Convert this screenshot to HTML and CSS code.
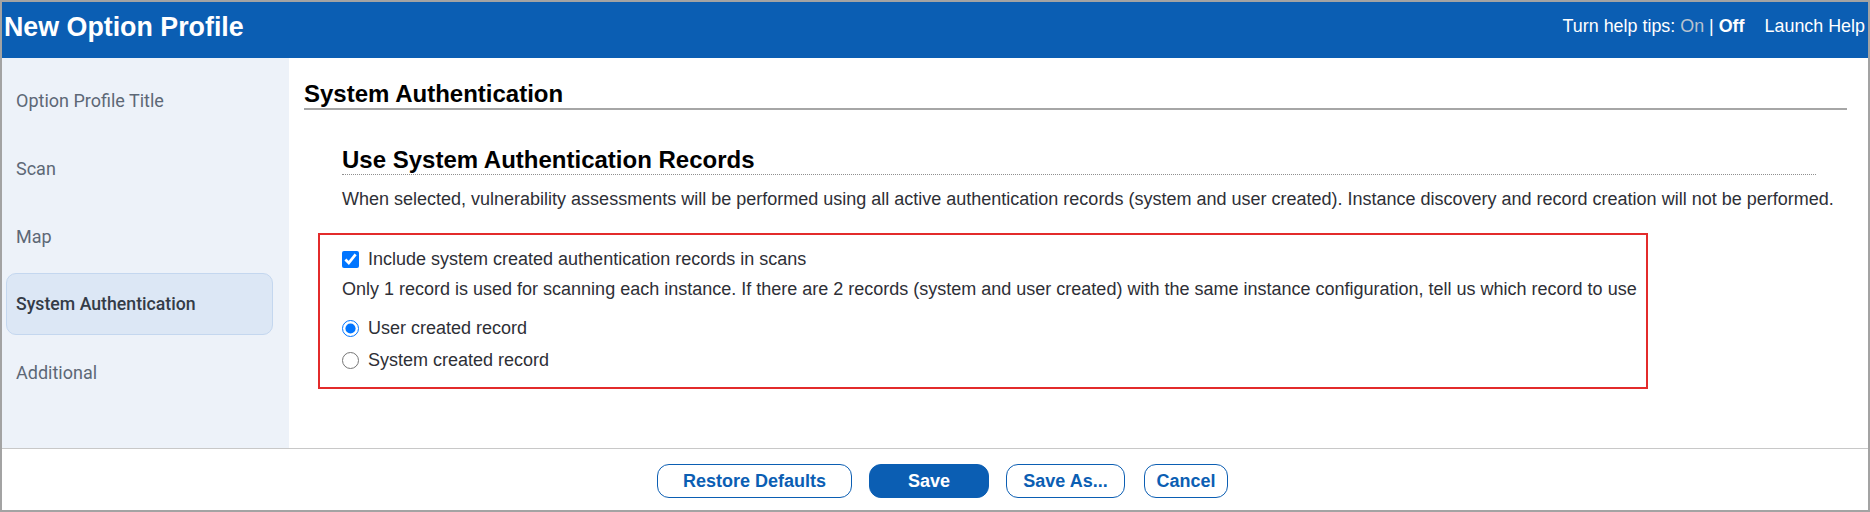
FILE: index.html
```html
<!DOCTYPE html>
<html lang="en">
<head>
<meta charset="utf-8">
<title>New Option Profile</title>
<link rel="stylesheet" href="styles.css">
</head>
<body>
<div class="frame">
  <header class="topbar">
    <h1 class="title">New Option Profile</h1>
    <div class="help">
      <span class="tips">Turn help tips: <span class="tips-on">On</span> | <b>Off</b></span>
      <span class="launch">Launch Help</span>
    </div>
  </header>
  <div class="middle">
    <nav class="sidebar">
      <div class="nav-item">Option Profile Title</div>
      <div class="nav-item">Scan</div>
      <div class="nav-item">Map</div>
      <div class="nav-item is-active">System Authentication</div>
      <div class="nav-item">Additional</div>
    </nav>
    <main class="content">
      <h2 class="page-heading">System Authentication</h2>
      <section class="auth-section">
        <h3 class="section-heading">Use System Authentication Records</h3>
        <p class="desc">When selected, vulnerability assessments will be performed using all active authentication records (system and user created). Instance discovery and record creation will not be performed.</p>
        <div class="highlight">
          <label class="opt-row"><input type="checkbox" checked><span>Include system created authentication records in scans</span></label>
          <p class="note">Only 1 record is used for scanning each instance. If there are 2 records (system and user created) with the same instance configuration, tell us which record to use</p>
          <label class="opt-row radio-first"><input type="radio" name="rec" checked><span>User created record</span></label>
          <label class="opt-row radio-second"><input type="radio" name="rec"><span>System created record</span></label>
        </div>
      </section>
    </main>
  </div>
  <footer class="actions">
    <button class="btn btn-restore">Restore Defaults</button>
    <button class="btn btn-primary btn-save">Save</button>
    <button class="btn btn-saveas">Save As...</button>
    <button class="btn btn-cancel">Cancel</button>
  </footer>
</div>
</body>
</html>
```
FILE: styles.css
```css
* { box-sizing: border-box; }
html, body { margin: 0; padding: 0; background: #fff; }
body { font-family: "Liberation Sans", Arial, sans-serif; color: #2e2f36; }

.frame {
  width: 1870px;
  height: 512px;
  border: 2px solid #a3a3a3;
  display: flex;
  flex-direction: column;
  overflow: hidden;
}

.topbar {
  height: 56px;
  flex: none;
  background: #0b5eb3;
  color: #fff;
  display: flex;
  justify-content: space-between;
  align-items: flex-start;
  padding: 0 3px 0 2px;
}
.title {
  margin: 0;
  padding-top: 9px;
  font-size: 26.8px;
  line-height: 32px;
  font-weight: bold;
}
.help {
  padding-top: 13px;
  font-size: 17.9px;
  line-height: 22px;
  display: flex;
}
.tips-on { color: #b9c3cf; }
.help b { font-weight: bold; }
.launch { margin-left: 20px; }

.middle {
  height: 390px;
  flex: none;
  display: flex;
}
.sidebar {
  width: 287px;
  flex: none;
  background: #edf2f9;
  padding: 11px 16px 0 4px;
  display: flex;
  flex-direction: column;
  gap: 6px;
}
.nav-item {
  height: 62px;
  display: flex;
  align-items: center;
  padding-left: 9px;
  font-family: Roboto, "Liberation Sans", sans-serif;
  font-size: 18px;
  color: #5d6876;
  border: 1px solid transparent;
  border-radius: 10px;
}
.nav-item.is-active {
  background: #dce7f5;
  border-color: #c4d7ef;
  color: #343c47;
  font-weight: 500;
  font-size: 17.7px;
}

.content {
  flex: 1;
  padding: 22px 21px 0 15px;
  min-width: 0;
}
.page-heading {
  margin: 0;
  font-size: 24px;
  line-height: 28px;
  font-weight: bold;
  color: #000;
  border-bottom: 2px solid #a6a6a6;
}
.auth-section {
  margin: 36px 31px 0 38px;
}
.section-heading {
  margin: 0;
  font-size: 24px;
  line-height: 28px;
  font-weight: bold;
  color: #000;
  border-bottom: 1px dotted #8f8f8f;
}
.desc {
  margin: 13px 0 0;
  font-size: 18px;
  line-height: 22px;
  white-space: nowrap;
}
.highlight {
  margin: 23px 0 0 -24px;
  width: 1330px;
  border: 2px solid #e32b2b;
  padding: 13px 0 16px 22px;
  font-size: 18px;
  line-height: 22px;
}
.opt-row {
  display: flex;
  align-items: center;
  gap: 9px;
}
.opt-row input {
  margin: 0;
  width: 17px;
  height: 17px;
  flex: none;
}
.note {
  margin: 8px 0 0;
  white-space: nowrap;
}
.radio-first { margin-top: 17px; }
.radio-second { margin-top: 10px; }

.actions {
  flex: 1;
  border-top: 1px solid #c8c8c8;
  display: flex;
  justify-content: center;
  align-items: flex-start;
  padding: 15px 0 0 15px;
  gap: 17px;
}
.btn {
  height: 34px;
  border: 1px solid #0b5eb3;
  border-radius: 12px;
  background: #fff;
  color: #0b5eb3;
  font-family: "Liberation Sans", Arial, sans-serif;
  font-size: 18px;
  font-weight: bold;
  padding: 0;
}
.btn-primary { background: #0b5eb3; color: #fff; }
.btn-restore { width: 195px; }
.btn-save { width: 120px; }
.btn-saveas { width: 119px; }
.btn-cancel { width: 84px; margin-left: 2px; }
```
